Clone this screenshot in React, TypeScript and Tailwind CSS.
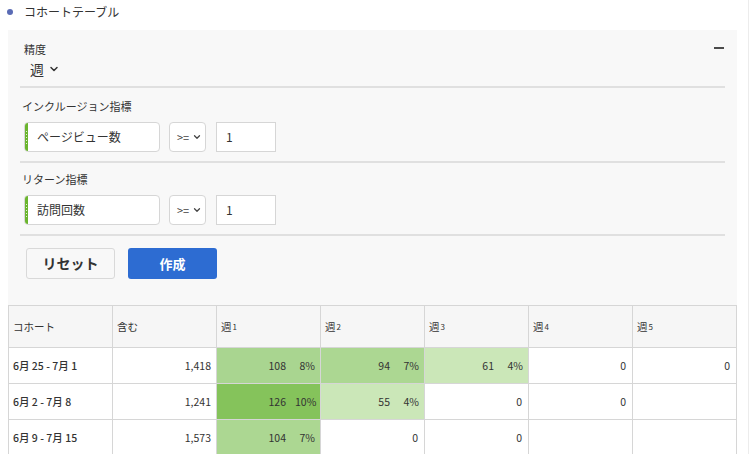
import { ChevronDown } from "lucide-react";

const rows = [
  {
    label: "6月 25 - 7月 1",
    total: "1,418",
    cells: [
      { v: "108", p: "8%", bg: "bg-[#a9d590]" },
      { v: "94", p: "7%", bg: "bg-[#acd792]" },
      { v: "61", p: "4%", bg: "bg-[#cbe7b8]" },
      { v: "0" },
      { v: "0" },
    ],
  },
  {
    label: "6月 2 - 7月 8",
    total: "1,241",
    cells: [
      { v: "126", p: "10%", bg: "bg-[#85c35b]" },
      { v: "55", p: "4%", bg: "bg-[#cbe7b8]" },
      { v: "0" },
      { v: "0" },
      { blank: true },
    ],
  },
  {
    label: "6月 9 - 7月 15",
    total: "1,573",
    cells: [
      { v: "104", p: "7%", bg: "bg-[#acd792]" },
      { v: "0" },
      { v: "0" },
      { blank: true },
      { blank: true },
    ],
  },
];

const MetricRow = ({ label, metric }: { label: string; metric: string }) => {
  return (
    <div>
      <div className="pl-[2px] text-[11px] leading-[14px] text-[#333]">{label}</div>
      <div className="mt-[9px] flex items-center pl-[4px]">
        <div className="flex h-[30px] w-[136px] overflow-hidden rounded-[4px] border border-[#d6d6d6] bg-white">
          <div className="flex w-[3px] flex-col items-center justify-center gap-[2px] bg-[#6bb52e]">
            {[0, 1, 2, 3, 4].map((i) => (
              <span key={i} className="h-px w-px bg-white/80" />
            ))}
          </div>
          <span className="pl-[9px] text-[12px] leading-[28px] text-[#333]">{metric}</span>
        </div>
        <div className="ml-[9px] flex h-[30px] w-[37px] items-center gap-[3px] rounded-[4px] border border-[#d6d6d6] bg-white pl-[7px]">
          <span className="text-[11px] text-[#444]">&gt;=</span>
          <ChevronDown size={10} strokeWidth={3} className="text-[#444]" />
        </div>
        <div className="ml-[10px] flex h-[30px] w-[60px] items-center border border-[#d6d6d6] bg-white pl-[9px] text-[12px] text-[#333]">
          1
        </div>
      </div>
    </div>
  );
};

const Sep = () => <div className="h-[2px] bg-[#e0e0e0]" />;

const App = () => {
  return (
    <div
      className="flex h-[454px] w-[750px] overflow-hidden bg-white"
      style={{ fontFamily: '"Noto Sans CJK JP", "Open Sans", sans-serif' }}
    >
      <div className="w-[748px]">
        <div className="flex h-[30px] items-center pb-[6px] pl-[7px]">
          <span className="h-[6px] w-[6px] rounded-full bg-[#5a6bb5]" />
          <span className="pl-[11px] text-[12px] text-[#333]">コホートテーブル</span>
        </div>
        <div className="ml-[8px] w-[729px] bg-[#f8f8f8]">
          <div className="px-[12px] pt-[12px]">
            <div className="flex items-start justify-between">
              <div>
                <div className="pl-[4px] text-[11px] leading-[14px] text-[#333]">精度</div>
                <div className="mt-[4px] flex items-center gap-[4px] pl-[10px]">
                  <span className="text-[14px] leading-[18px] text-[#333]">週</span>
                  <ChevronDown size={12} strokeWidth={3} className="text-[#333]" />
                </div>
              </div>
              <div className="mr-[1px] mt-[5px] h-[2px] w-[10px] bg-[#4b4b4b]" />
            </div>
            <div className="mt-[8px]">
              <Sep />
            </div>
            <div className="mt-[11px]">
              <MetricRow label="インクルージョン指標" metric="ページビュー数" />
            </div>
            <div className="mt-[9px]">
              <Sep />
            </div>
            <div className="mt-[9px]">
              <MetricRow label="リターン指標" metric="訪問回数" />
            </div>
            <div className="mt-[9px]">
              <Sep />
            </div>
            <div className="mt-[12px] flex gap-[13px] pl-[6px]">
              <button className="h-[31px] w-[89px] rounded-[3px] border border-[#d9d9d9] bg-[#f8f8f8] text-[14px] font-bold text-[#333]">
                リセット
              </button>
              <button className="h-[31px] w-[89px] rounded-[3px] bg-[#2d6cd2] text-[13px] font-bold text-white">
                作成
              </button>
            </div>
          </div>
          <div className="mt-[26px] grid grid-cols-[repeat(7,104px)] border-l border-t border-[#d6d6d6] text-[10.5px] text-[#333]">
            {["コホート", "含む", "週", "週", "週", "週", "週"].map((h, i) => (
              <div
                key={i}
                className="flex h-[42px] items-center border-b border-r border-[#d6d6d6] bg-[#f6f6f6] pl-[4px]"
              >
                {h}
                {i > 1 && <span className="pl-[1px] text-[8px]">{i - 1}</span>}
              </div>
            ))}
            {rows.map((r) => (
              <div key={r.label} className="contents">
                <div className="flex h-[36px] items-center border-b border-r border-[#d6d6d6] bg-white pl-[4px] font-medium">
                  {r.label}
                </div>
                <div className="flex h-[36px] items-center justify-end border-b border-r border-[#d6d6d6] bg-white pr-[5px]">
                  {r.total}
                </div>
                {r.cells.map((c, i) => (
                  <div
                    key={i}
                    className={`flex h-[36px] items-center justify-end border-b border-r border-[#d6d6d6] pr-[5px] ${
                      c.bg ?? "bg-white"
                    }`}
                  >
                    {!c.blank && (
                      <>
                        <span className={c.p ? "pr-[9px]" : "pr-[1px]"}>{c.v}</span>
                        {c.p && <span className="w-[20px] text-right">{c.p}</span>}
                      </>
                    )}
                  </div>
                ))}
              </div>
            ))}
          </div>
        </div>
      </div>
      <div className="w-px bg-[#ececec]" />
    </div>
  );
};

export default App;
